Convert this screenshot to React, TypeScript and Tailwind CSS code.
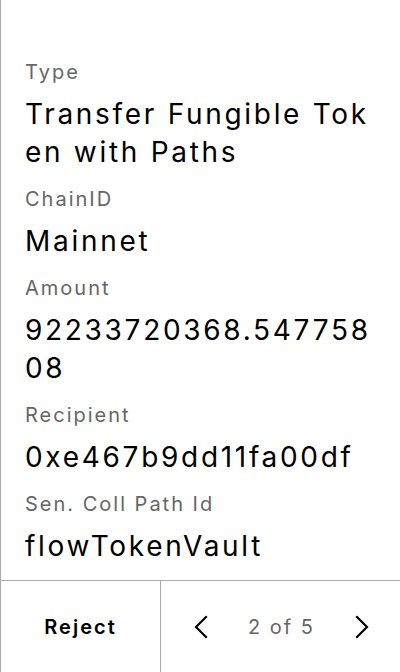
import React from 'react';

const fields = [
    { label: 'Type', value: 'Transfer Fungible Token with Paths' },
    { label: 'ChainID', value: 'Mainnet' },
    { label: 'Amount', value: '92233720368.54775808' },
    { label: 'Recipient', value: '0xe467b9dd11fa00df' },
    { label: 'Sen. Coll Path Id', value: 'flowTokenVault' },
];

const Chevron = ({ dir }: { dir: 'left' | 'right' }) => (
    <svg width="16" height="24" viewBox="0 0 16 24" fill="none" stroke="#000" strokeWidth="2.2" strokeLinecap="square">
        {dir === 'left' ? <path d="M13 2 L3 12 L13 22" /> : <path d="M3 2 L13 12 L3 22" />}
    </svg>
);

export default function App() {
    return (
        <div className="h-[672px] w-[400px] flex flex-col bg-white border-l border-[#ababab] font-['Inter',sans-serif]">
            {/* Fields */}
            <div className="flex-1 px-6 pt-[58px] flex flex-col gap-[14px]">
                {fields.map((f) => (
                    <div key={f.label} className="flex flex-col">
                        <div className="text-[20px] leading-[28px] tracking-[2px] text-[#666]">{f.label}</div>
                        <div className="mt-[9px] text-[28px] leading-[38px] tracking-[2.7px] text-black break-all">{f.value}</div>
                    </div>
                ))}
            </div>

            {/* Footer */}
            <div className="h-[92px] flex border-t border-[#ababab]">
                <button className="w-[160px] flex items-center justify-center text-[20px] font-semibold tracking-[2px] text-black border-r border-[#ababab]">
                    Reject
                </button>
                <div className="flex-1 flex items-center justify-between pl-[32px] pr-[30px]">
                    <Chevron dir="left" />
                    <span className="text-[20px] tracking-[2px] text-[#666]">2 of 5</span>
                    <Chevron dir="right" />
                </div>
            </div>
        </div>
    );
}
